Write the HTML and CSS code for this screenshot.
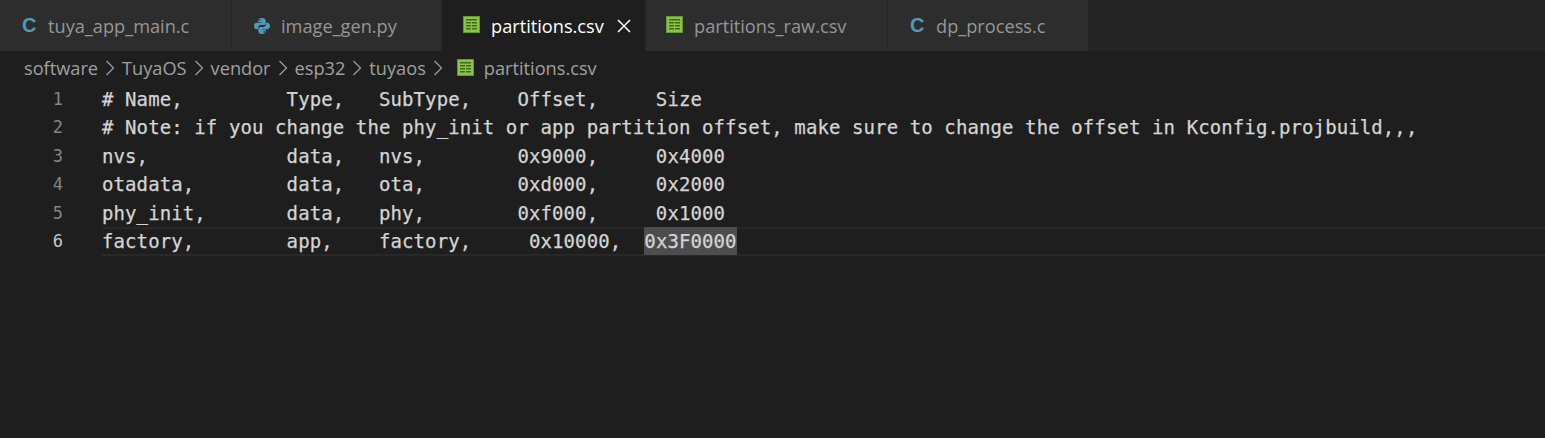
FILE: index.html
```html
<!DOCTYPE html>
<html lang="en">
<head>
<meta charset="utf-8">
<title>partitions.csv</title>
<link rel="stylesheet" href="styles.css">
</head>
<body>
<svg class="defs" width="0" height="0" aria-hidden="true">
  <symbol id="csv" viewBox="0 0 17 17">
    <rect x="0" y="0" width="17" height="17" fill="#8dc149"/>
    <rect x="0.5" y="0.5" width="16" height="16" fill="none" stroke="#5f9a33"/>
    <path d="M3 3h11v1.500H3zM3 6h5v1.500H3zM9 6h5v1.500H9zM3 9h5v1.500H3zM9 9h5v1.500H9zM3 12h5v1.500H3zM9 12h5v1.500H9z" fill="#3d6b1c"/>
  </symbol>
  <symbol id="py" viewBox="0 0 16 16">
    <path fill="#519aba" d="M7.9 0C5.6 0 4.3 1 4.3 2.4v1.800h3.800v.6H2.600C1.100 4.800 0 6 0 8s1.100 3.300 2.600 3.300h1.600V9.400c0-1.300 1.100-2.400 2.400-2.400h3c1.200 0 2.100-1 2.100-2.100V2.400C11.700 1 10.300 0 7.900 0zM5.800 1.300a.8.8 0 1 1 0 1.600.8.8 0 0 1 0-1.600z"/>
    <path fill="#519aba" d="M8.100 16c2.300 0 3.600-1 3.600-2.400v-1.800H7.900v-.6h5.500c1.500 0 2.600-1.200 2.600-3.200s-1.100-3.300-2.600-3.300h-1.600v1.900c0 1.300-1.100 2.400-2.400 2.400h-3c-1.200 0-2.100 1-2.100 2.100v2.500C4.300 15 5.700 16 8.100 16zm2.100-1.300a.8.8 0 1 1 0-1.600.8.8 0 0 1 0 1.600z"/>
  </symbol>
</svg>

<div class="tabs">
  <div class="tab tab-main">
    <span class="c-icon">C</span><span class="tab-name">tuya_app_main.c</span>
  </div>
  <div class="tab tab-image">
    <svg class="icon-py"><use href="#py"/></svg><span class="tab-name">image_gen.py</span>
  </div>
  <div class="tab tab-active">
    <svg class="icon-csv"><use href="#csv"/></svg><span class="tab-name">partitions.csv</span>
    <svg class="close" viewBox="0 0 14 14"><path d="M1 1l12 12M13 1L1 13" stroke="#fff" stroke-width="1.500" fill="none"/></svg>
  </div>
  <div class="tab tab-raw">
    <svg class="icon-csv"><use href="#csv"/></svg><span class="tab-name">partitions_raw.csv</span>
  </div>
  <div class="tab tab-dp">
    <span class="c-icon">C</span><span class="tab-name">dp_process.c</span>
  </div>
</div>

<nav class="crumbs">
  <span>software</span><svg class="sep" viewBox="0 0 10 16"><path d="M1.500 1l7 7-7 7" fill="none" stroke="#a0a0a0" stroke-width="1.200"/></svg>
  <span>TuyaOS</span><svg class="sep" viewBox="0 0 10 16"><path d="M1.500 1l7 7-7 7" fill="none" stroke="#a0a0a0" stroke-width="1.200"/></svg>
  <span>vendor</span><svg class="sep" viewBox="0 0 10 16"><path d="M1.500 1l7 7-7 7" fill="none" stroke="#a0a0a0" stroke-width="1.200"/></svg>
  <span>esp32</span><svg class="sep" viewBox="0 0 10 16"><path d="M1.500 1l7 7-7 7" fill="none" stroke="#a0a0a0" stroke-width="1.200"/></svg>
  <span>tuyaos</span><svg class="sep" viewBox="0 0 10 16"><path d="M1.500 1l7 7-7 7" fill="none" stroke="#a0a0a0" stroke-width="1.200"/></svg>
  <svg class="icon-csv crumb-icon"><use href="#csv"/></svg><span>partitions.csv</span>
</nav>

<main class="editor">
  <div class="line"><span class="num">1</span><code class="code"># Name,         Type,   SubType,    Offset,     Size</code></div>
  <div class="line"><span class="num">2</span><code class="code"># Note: if you change the phy_init or app partition offset, make sure to change the offset in Kconfig.projbuild,,,</code></div>
  <div class="line"><span class="num">3</span><code class="code">nvs,            data,   nvs,        0x9000,     0x4000</code></div>
  <div class="line"><span class="num">4</span><code class="code">otadata,        data,   ota,        0xd000,     0x2000</code></div>
  <div class="line"><span class="num">5</span><code class="code">phy_init,       data,   phy,        0xf000,     0x1000</code></div>
  <div class="line line-current"><span class="num">6</span><code class="code">factory,        app,    factory,     0x10000,  <span class="sel">0x3F0000</span></code></div>
</main>
</body>
</html>
```
FILE: styles.css
```css
* { box-sizing: border-box; }
html, body { margin: 0; padding: 0; }
body {
  width: 1545px;
  height: 438px;
  overflow: hidden;
  background: #1e1e1e;
  font-family: "Open Sans", "Noto Sans", sans-serif;
}
.defs { display: block; height: 0; }

.tabs {
  display: flex;
  height: 51px;
  background: #252526;
}
.tab {
  display: flex;
  align-items: center;
  height: 51px;
  background: #2d2d2d;
  border-right: 1px solid #252526;
  color: #969696;
  font-size: 18.200px;
  white-space: nowrap;
}
.tab-main { width: 232px; padding-left: 22px; }
.tab-image { width: 210px; padding-left: 22px; }
.tab-active { width: 204px; padding-left: 21px; background: #1e1e1e; color: #fff; }
.tab-raw { width: 242px; padding-left: 20px; }
.tab-dp { width: 201px; padding-left: 22px; }

.c-icon {
  width: 26px;
  color: #519aba;
  font-family: "Liberation Sans", sans-serif;
  font-weight: 700;
  font-size: 20px;
}
.icon-py { width: 16px; height: 16px; margin-right: 11px; }
.icon-csv { width: 17px; height: 17px; margin-top: -2px; margin-right: 11px; flex: none; }
.tab-active .close { width: 14px; height: 14px; margin-left: 13px; }

.crumbs {
  display: flex;
  align-items: center;
  height: 33.500px;
  padding-left: 24px;
  color: #a0a0a0;
  font-size: 18.200px;
  white-space: nowrap;
}
.sep { width: 10px; height: 16px; margin: 0 7px; flex: none; }
.crumb-icon { margin-left: 7px; margin-right: 10px; margin-top: -1px; }

.editor {
  display: flex;
  flex-direction: column;
}
.line {
  display: flex;
  height: 28.500px;
  line-height: 28.500px;
  flex: none;
}
.num {
  width: 102px;
  padding-right: 39px;
  text-align: right;
  color: #858585;
  font-family: "DejaVu Sans Mono", monospace;
  font-size: 17px;
}
.code {
  flex: 1;
  white-space: pre;
  color: #d4d4d4;
  font-family: "DejaVu Sans Mono", monospace;
  font-size: 19px;
  letter-spacing: 0.100px;
  -webkit-text-stroke: 0.250px #d4d4d4;
}
.line-current .num { color: #c6c6c6; }
.line-current .code {
  border-top: 2px solid #282828;
  border-bottom: 2px solid #282828;
  line-height: 24.500px;
}
.sel {
  display: inline-block;
  height: 28px;
  margin-top: -2px;
  line-height: 28px;
  vertical-align: top;
  background: #4d4d4d;
}
```
